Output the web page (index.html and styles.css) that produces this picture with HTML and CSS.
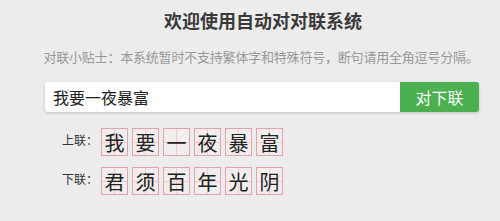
FILE: index.html
```html
<!DOCTYPE html>
<html lang="zh-CN">
<head>
    <meta charset="UTF-8">
    <title>自动对对联系统</title>
    <link rel="stylesheet" href="styles.css">
</head>
<body>
    <div class="container">
        <h1>欢迎使用自动对对联系统</h1>
        <p class="tip">对联小贴士：本系统暂时不支持繁体字和特殊符号，断句请用全角逗号分隔。</p>
        <div class="search">
            <input type="text" class="search-input" value="我要一夜暴富">
            <button class="search-btn">对下联</button>
        </div>
        <div class="couplet">
            <span class="couplet-label">上联：</span>
            <div class="grid-row">
                <span class="cell">我</span>
                <span class="cell">要</span>
                <span class="cell">一</span>
                <span class="cell">夜</span>
                <span class="cell">暴</span>
                <span class="cell">富</span>
            </div>
        </div>
        <div class="couplet">
            <span class="couplet-label">下联：</span>
            <div class="grid-row">
                <span class="cell">君</span>
                <span class="cell">须</span>
                <span class="cell">百</span>
                <span class="cell">年</span>
                <span class="cell">光</span>
                <span class="cell">阴</span>
            </div>
        </div>
    </div>
</body>
</html>
```

FILE: styles.css
```css
/* 全局 */
body {
    margin: 0;
    background: #ececec;
    font-family: "Noto Sans CJK SC", "Noto Sans", sans-serif;
    color: #333;
}
.container {
    width: 500px;
    padding-top: 8px;
    box-sizing: border-box;
}
h1 {
    margin: 0;
    font-size: 18px;
    line-height: 24px;
    font-weight: bold;
    color: #3a3a3a;
    text-align: center;
    padding-left: 26px;
}
.tip {
    margin: 15px 0 0;
    font-size: 13px;
    line-height: 20px;
    color: #999;
    text-align: center;
    padding-left: 22px;
    letter-spacing: -0.2px;
}
/* 输入栏 */
.search {
    display: flex;
    margin: 15px 21px 0 45px;
    height: 30px;
    box-shadow: 0 1px 3px rgba(0, 0, 0, 0.2);
    border-radius: 3px;
}
.search-input {
    flex: 1;
    border: none;
    outline: none;
    padding: 0 8px;
    font-family: inherit;
    font-size: 16px;
    color: #222;
    background: #fff;
    border-radius: 3px 0 0 3px;
}
.search-btn {
    width: 79px;
    border: none;
    background: #4caf50;
    color: #fff;
    font-family: inherit;
    font-size: 16px;
    border-radius: 0 3px 3px 0;
    cursor: pointer;
}
/* 对联 */
.couplet {
    display: flex;
    align-items: center;
    margin-top: 16px;
    padding-left: 62px;
}
.couplet + .couplet {
    margin-top: 11px;
}
.couplet-label {
    width: 39px;
    font-size: 12px;
    line-height: 16px;
    color: #333;
    margin-top: -4px;
}
.grid-row {
    display: flex;
    gap: 4px;
}
.cell {
    width: 27px;
    height: 28px;
    box-sizing: border-box;
    border: 1px solid #e3a3ab;
    display: flex;
    justify-content: center;
    align-items: center;
    font-size: 20px;
    color: #222;
    background:
        linear-gradient(#f2c9cc, #f2c9cc) center / 1px 100% no-repeat,
        linear-gradient(#f2c9cc, #f2c9cc) center / 100% 1px no-repeat,
        linear-gradient(to top right, transparent calc(50% - 0.5px), #f6dcde 50%, transparent calc(50% + 0.5px)),
        linear-gradient(to bottom right, transparent calc(50% - 0.5px), #f6dcde 50%, transparent calc(50% + 0.5px)),
        #f0eeee;
}
```
